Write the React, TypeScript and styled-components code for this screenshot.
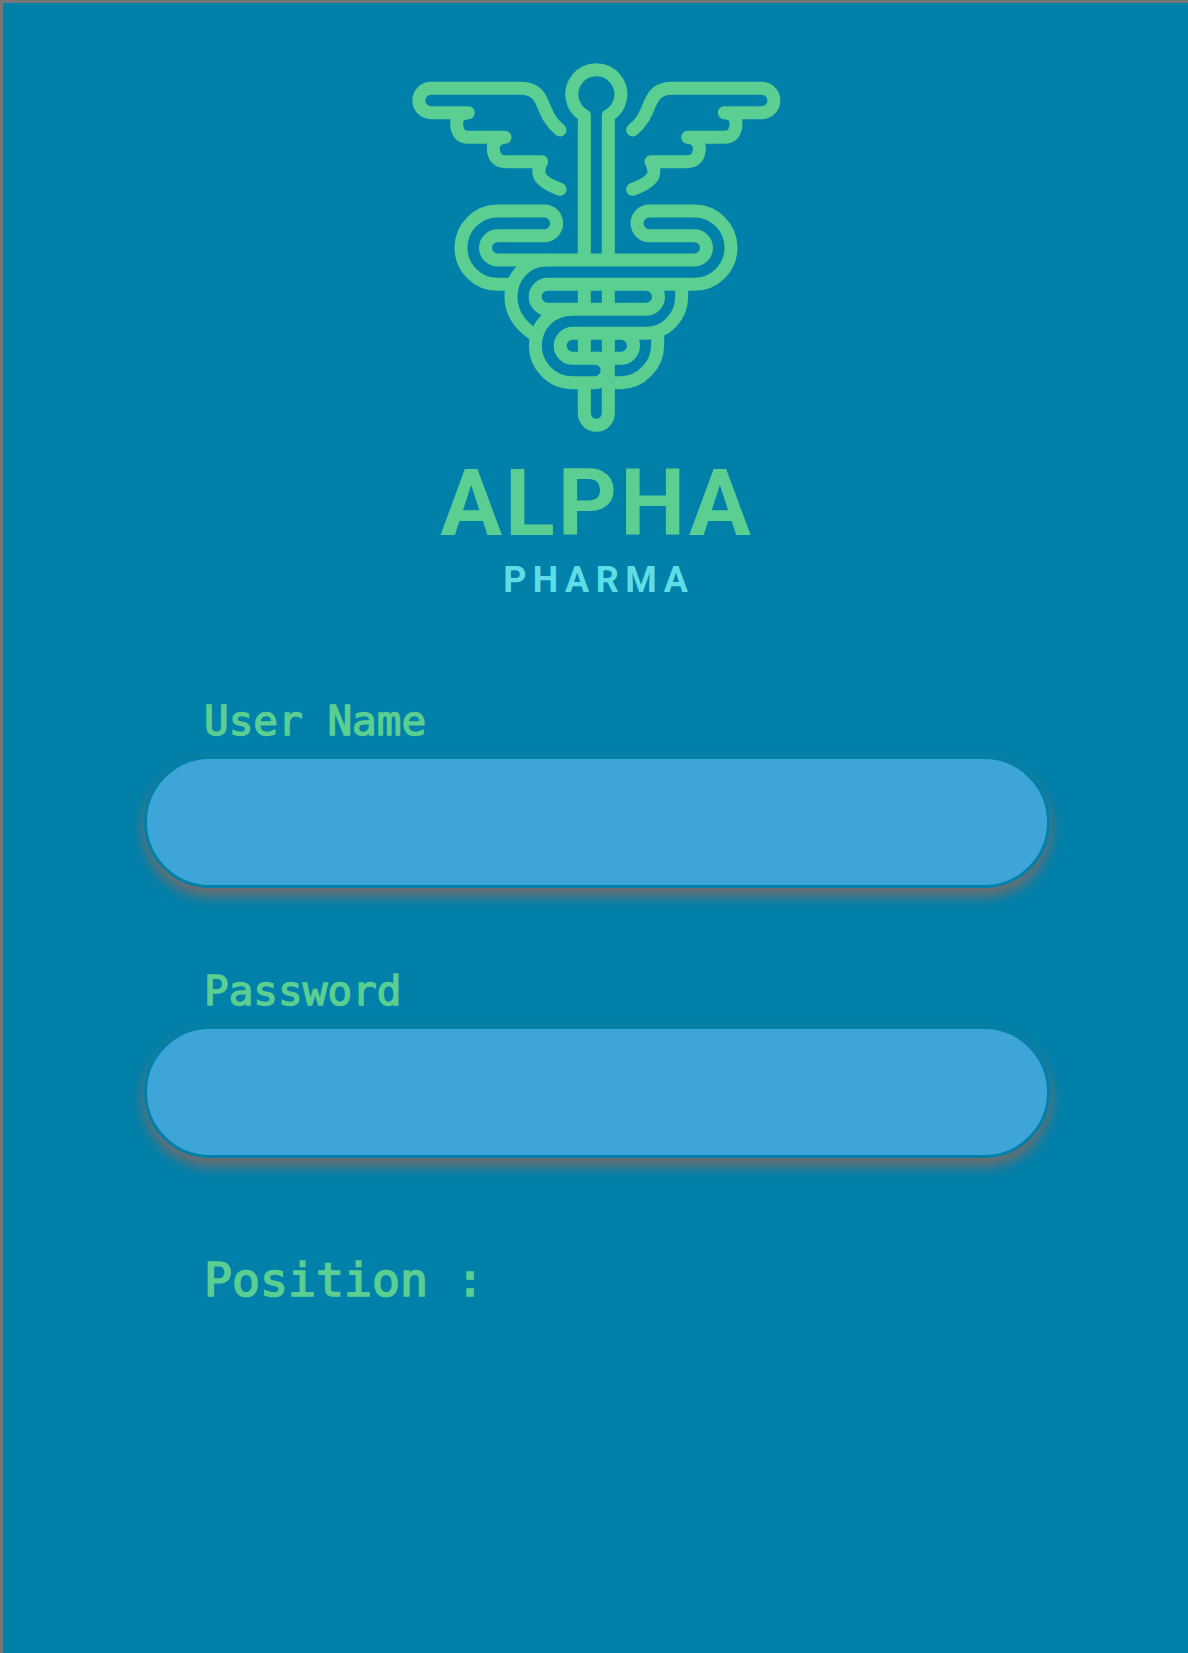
import React from "react";
import styled, { createGlobalStyle } from "styled-components";

const Global = createGlobalStyle`
  html, body { margin: 0; padding: 0; background: #0180aa; }
  * { box-sizing: border-box; }
`;
const Page = styled.main`
  width: 1188px;
  height: 1653px;
  overflow: hidden;
  background: #0180aa;
  border-top: 3px solid #777777;
  border-left: 3px solid #777777;
  display: flex;
  flex-direction: column;
  align-items: center;
  padding-top: 47px;
`;
const LogoMark = styled.svg`
  display: block;
  width: 410px;
  height: 400px;
  flex: none;
`;
const Wordmark = styled.div`
  margin-top: 4px;
  font-family: Roboto, "Liberation Sans", sans-serif;
  font-weight: 700;
  font-size: 92px;
  line-height: 100px;
  height: 100px;
  letter-spacing: 3px;
  margin-right: -3px;
  color: #5bce91;
`;
const SubMark = styled.div`
  margin-top: 4px;
  font-family: Roboto, "Liberation Sans", sans-serif;
  font-weight: 700;
  font-size: 36px;
  line-height: 44px;
  letter-spacing: 6.5px;
  margin-right: -6.5px;
  color: #5fdde6;
`;
const Form = styled.form`
  width: 100%;
  padding: 0 0 0 141px;
  margin-top: 91px;
  display: flex;
  flex-direction: column;
  gap: 75px;
`;
const Field = styled.div`
  display: flex;
  flex-direction: column;
  gap: 7px;
`;
const Label = styled.label`
  padding-left: 60px;
  font-family: "DejaVu Sans Mono", monospace;
  font-weight: 400;
  font-size: 41px;
  line-height: 56px;
  color: #5bce91;
  -webkit-text-stroke: 1.4px #5bce91;
`;
const Input = styled.input`
  display: block;
  width: 906px;
  height: 132px;
  border: 3px solid #0180aa;
  border-radius: 66px;
  background: #3ea5d8;
  outline: none;
  box-shadow: 0 8px 14px 0 #776c6a;
`;
const Position = styled.div`
  padding-left: 60px;
  margin-top: 17px;
  font-family: "DejaVu Sans Mono", monospace;
  font-weight: 400;
  font-size: 46.5px;
  line-height: 60px;
  color: #5bce91;
  -webkit-text-stroke: 1.7px #5bce91;
`;

const wing =
  "M507 240 C470 210 465 180 450 150 C438 125 415 115 390 115 H120 A36.5 36.5 0 0 0 120 188 H232 Q195 190 197 225 Q200 262 232 262 H342 Q305 265 307 300 Q310 335 345 335 H452 Q440 355 445 375 Q452 397 507 418";

function Caduceus() {
  return (
    <LogoMark viewBox="0 0 1230 1200" fill="none" stroke="#5bce91" strokeWidth="39" strokeLinecap="round" strokeLinejoin="round" aria-hidden="true">
      <path strokeLinecap="butt" d="M580 630 V197 A73.5 73.5 0 1 1 652 197 V630 M580 703 V778 M652 703 V778 M580 850 V925 M652 850 V998" />
      <path strokeLinecap="butt" d="M580 998 V1090 A36 36 0 0 0 652 1090 V998" />
      <path d={wing} />
      <g transform="translate(1232 0) scale(-1 1)">
        <path d={wing} />
      </g>
      <path strokeLinecap="butt" d="M358 703 H320 A110 110 0 0 1 320 483 H460 A37 37 0 0 1 460 557 H320 A36.5 36.5 0 0 0 320 630 H910 A36.5 36.5 0 0 0 910 557 H775 A37 37 0 0 1 775 483 H910 A110 110 0 0 1 910 703 H470 A37.5 37.5 0 0 0 470 778 H765 A37.5 37.5 0 0 0 765 703" />
      <path strokeLinecap="butt" d="M465 630 C405 630 360 680 360 740 C360 790 390 830 433 856" />
      <path strokeLinecap="butt" d="M872 703 V740 C872 800 825 850 765 850 H545 A37.5 37.5 0 0 0 545 925 H690 A37.5 37.5 0 0 0 690 850" />
      <path strokeLinecap="butt" d="M800 850 V885 C800 945 750 998 690 998 H670" />
      <path strokeLinecap="butt" d="M545 778 C480 778 433 825 433 888 C433 945 480 998 545 998 H612 A36.5 36.5 0 0 0 612 925" />
    </LogoMark>
  );
}

export default function App() {
  return (
    <>
      <Global />
      <Page>
        <Caduceus />
        <Wordmark>ALPHA</Wordmark>
        <SubMark>PHARMA</SubMark>
        <Form>
          <Field>
            <Label htmlFor="user">User Name</Label>
            <Input id="user" type="text" />
          </Field>
          <Field>
            <Label htmlFor="pass">Password</Label>
            <Input id="pass" type="password" />
          </Field>
          <Position>Position :</Position>
        </Form>
      </Page>
    </>
  );
}
